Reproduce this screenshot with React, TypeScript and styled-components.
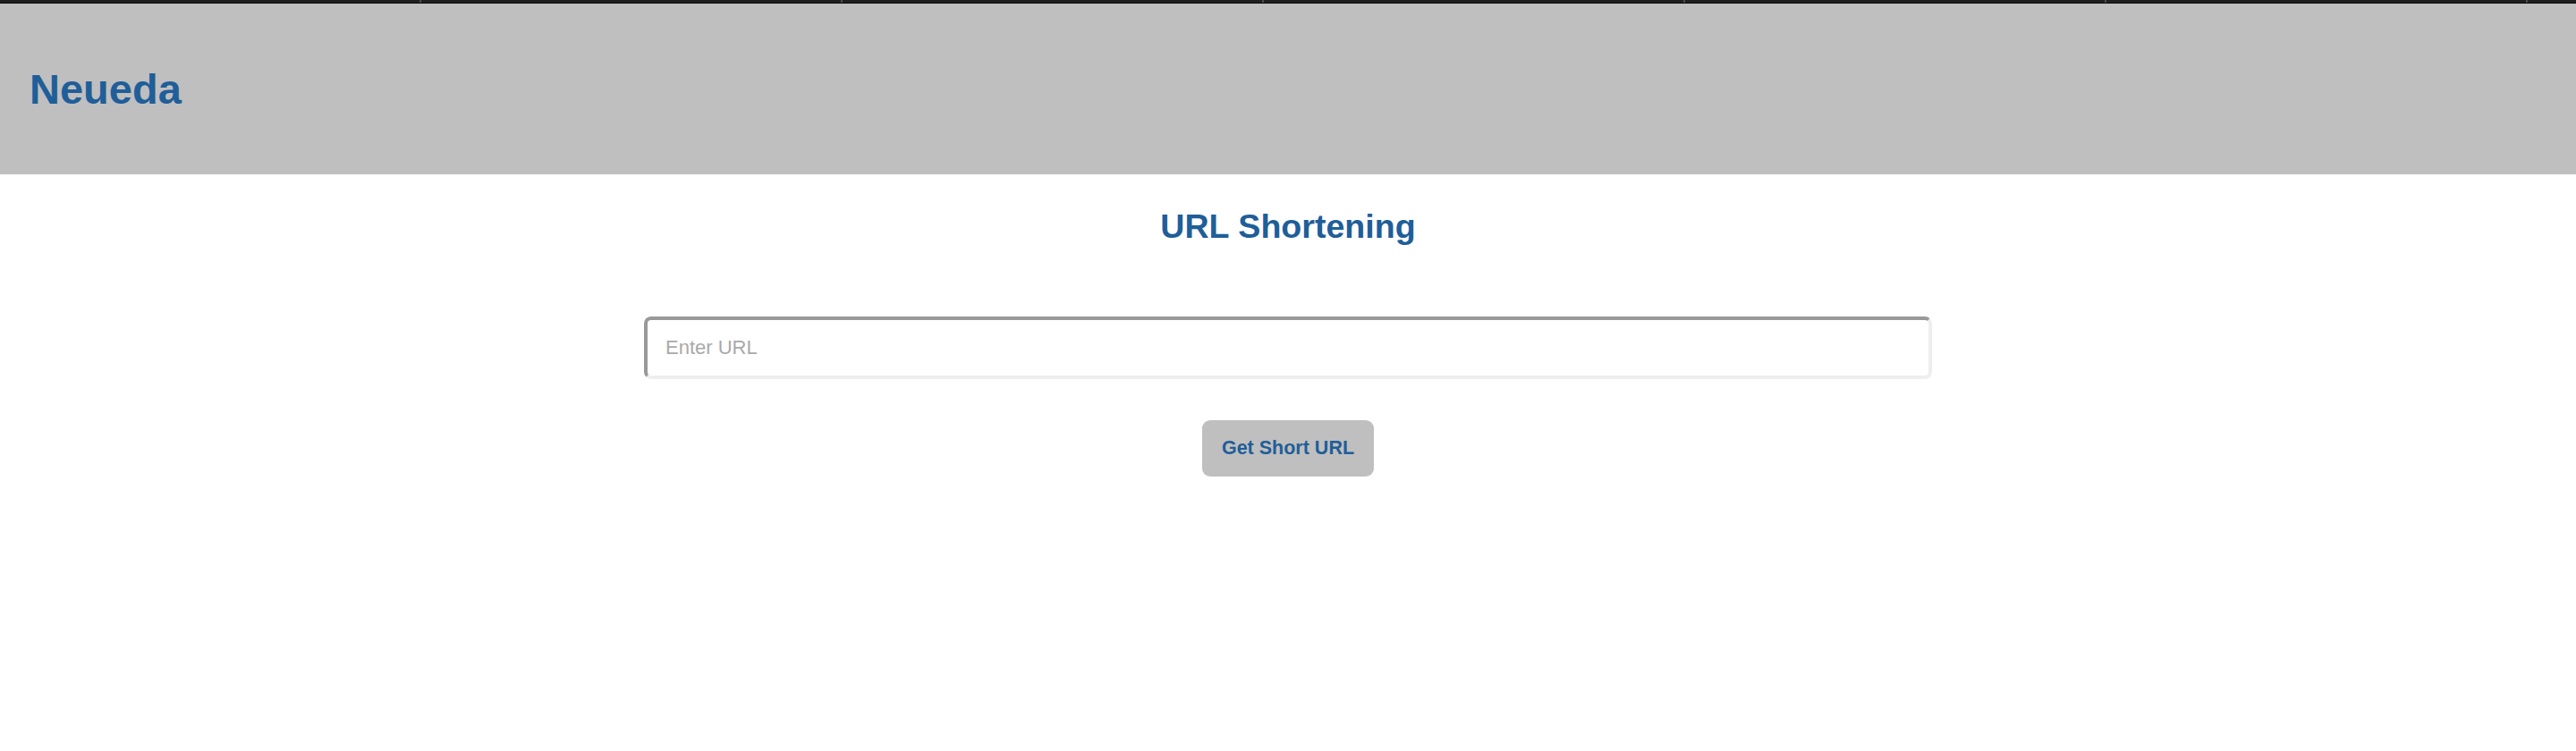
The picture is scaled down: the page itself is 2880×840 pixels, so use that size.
import React from "react";
import styled, { createGlobalStyle } from "styled-components";

const GlobalStyle = createGlobalStyle`
  html, body { margin: 0; padding: 0; background: #ffffff; }
  body { font-family: "Liberation Sans", Arial, sans-serif; }
  * { box-sizing: border-box; }
`;

const TopStrip = styled.div`
  display: grid;
  grid-template-columns: repeat(6, 471px);
  height: 4px;
  background: #1f1f1f;
  border-bottom: 1px solid #0c0c0c;
`;

const StripSegment = styled.div`
  border-right: 2px solid #4a4a4a;
`;

const Header = styled.header`
  height: 191px;
  background: #bfbfbf;
  display: flex;
  align-items: center;
  padding: 0 33px 0;
`;

const Brand = styled.h1`
  margin: 0;
  font-size: 47px;
  font-weight: 700;
  color: #1f5e99;
`;

const Main = styled.main`
  display: flex;
  flex-direction: column;
  align-items: center;
  padding-top: 37px;
`;

const Title = styled.h2`
  margin: 0;
  font-size: 37.6px;
  font-weight: 700;
  color: #1f5e99;
`;

const UrlInput = styled.input`
  margin-top: 79px;
  width: 1440px;
  height: 70px;
  border-width: 4px;
  border-style: solid;
  border-color: #999999 #eeeeee #eeeeee #999999;
  border-radius: 8px;
  padding: 0 20px;
  font-family: "Liberation Sans", Arial, sans-serif;
  font-size: 22px;
  color: #333;
  outline: none;
  &::placeholder { color: #a9a9a9; }
`;

const Button = styled.button`
  margin-top: 46px;
  width: 192px;
  height: 63px;
  border: none;
  border-radius: 9px;
  background: #bfbfbf;
  color: #1f5e99;
  font-family: "Liberation Sans", Arial, sans-serif;
  font-size: 21.5px;
  font-weight: 700;
  cursor: pointer;
`;

export default function App() {
  return (
    <>
      <GlobalStyle />
      <TopStrip>
        {Array.from({ length: 6 }).map((_, i) => (
          <StripSegment key={i} />
        ))}
      </TopStrip>
      <Header>
        <Brand>Neueda</Brand>
      </Header>
      <Main>
        <Title>URL Shortening</Title>
        <UrlInput type="text" placeholder="Enter URL" />
        <Button>Get Short URL</Button>
      </Main>
    </>
  );
}
